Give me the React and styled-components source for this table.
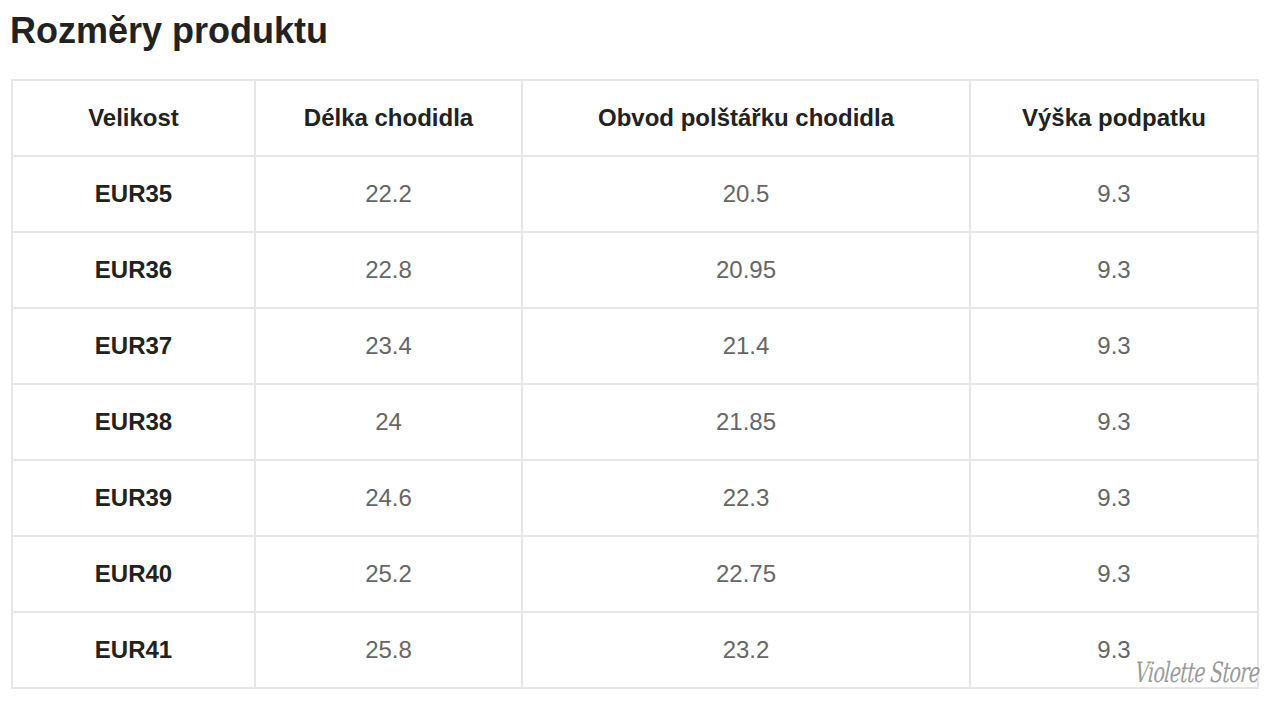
import React from 'react';
import styled, { createGlobalStyle } from 'styled-components';

const GlobalStyle = createGlobalStyle`
  html, body {
    margin: 0;
    padding: 0;
    background: #fff;
  }
  body {
    font-family: 'Liberation Sans', Arial, sans-serif;
  }
`;

const Page = styled.div`
  padding: 11px 0 0 11px;
`;

const Title = styled.h1`
  margin: 0 0 28px -1px;
  font-size: 36px;
  line-height: 40px;
  font-weight: 700;
  color: #222;
`;

const TableWrap = styled.div`
  position: relative;
  width: 1248px;
`;

const Table = styled.table`
  border-collapse: separate;
  border-spacing: 0;
  table-layout: fixed;
  width: 1248px;
  border-top: 2px solid #e6e6e6;
  border-left: 2px solid #e6e6e6;
`;

const Cell = styled.td`
  box-sizing: border-box;
  height: 76px;
  padding: 0;
  border-right: 2px solid #e6e6e6;
  border-bottom: 2px solid #e6e6e6;
  text-align: center;
  vertical-align: middle;
  font-size: 24px;
  font-weight: ${p => (p.$bold ? 700 : 400)};
  color: ${p => (p.$bold ? '#222' : '#666')};
`;

const HeadCell = styled(Cell).attrs({ as: 'th' })`
  font-weight: 700;
  color: #222;
`;

const Watermark = styled.div`
  position: absolute;
  right: 1px;
  bottom: 0;
  font-family: 'DejaVu Serif', 'Liberation Serif', serif;
  font-style: italic;
  font-weight: 300;
  font-size: 28px;
  letter-spacing: -1px;
  color: #9a9a9a;
  transform: scaleX(0.68) skewX(-6deg);
  transform-origin: right bottom;
  pointer-events: none;
  white-space: nowrap;
`;

const columns = [
  { label: 'Velikost', width: 243 },
  { label: 'Délka chodidla', width: 267 },
  { label: 'Obvod polštářku chodidla', width: 448 },
  { label: 'Výška podpatku', width: 288 },
];

const rows = [
  ['EUR35', '22.2', '20.5', '9.3'],
  ['EUR36', '22.8', '20.95', '9.3'],
  ['EUR37', '23.4', '21.4', '9.3'],
  ['EUR38', '24', '21.85', '9.3'],
  ['EUR39', '24.6', '22.3', '9.3'],
  ['EUR40', '25.2', '22.75', '9.3'],
  ['EUR41', '25.8', '23.2', '9.3'],
];

export default function App() {
  return (
    <Page>
      <GlobalStyle />
      <Title>Rozměry produktu</Title>
      <TableWrap>
        <Table>
          <colgroup>
            {columns.map(c => (
              <col key={c.label} style={{ width: c.width }} />
            ))}
          </colgroup>
          <thead>
            <tr>
              {columns.map(c => (
                <HeadCell key={c.label}>{c.label}</HeadCell>
              ))}
            </tr>
          </thead>
          <tbody>
            {rows.map(r => (
              <tr key={r[0]}>
                {r.map((v, i) => (
                  <Cell key={i} $bold={i === 0}>{v}</Cell>
                ))}
              </tr>
            ))}
          </tbody>
        </Table>
        <Watermark>Violette Store</Watermark>
      </TableWrap>
    </Page>
  );
}
